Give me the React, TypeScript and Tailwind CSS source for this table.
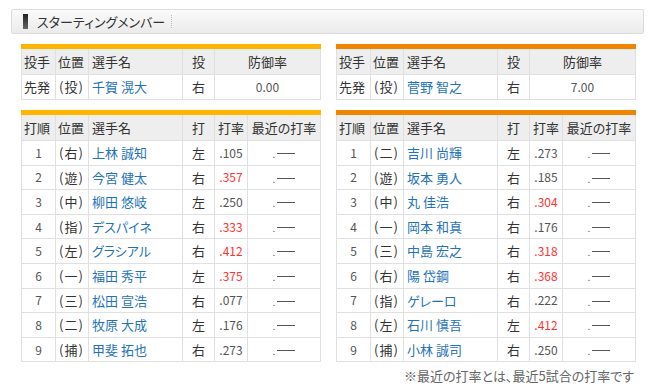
import React from "react";

type Batter = [string, string, string, string, string];

const leftBatters: Batter[] = [
  ["1", "右", "上林 誠知", "左", ".105"],
  ["2", "遊", "今宮 健太", "右", ".357"],
  ["3", "中", "柳田 悠岐", "左", ".250"],
  ["4", "指", "デスパイネ", "右", ".333"],
  ["5", "左", "グラシアル", "右", ".412"],
  ["6", "一", "福田 秀平", "左", ".375"],
  ["7", "三", "松田 宣浩", "右", ".077"],
  ["8", "二", "牧原 大成", "左", ".176"],
  ["9", "捕", "甲斐 拓也", "右", ".273"],
];

const rightBatters: Batter[] = [
  ["1", "二", "吉川 尚輝", "左", ".273"],
  ["2", "遊", "坂本 勇人", "右", ".185"],
  ["3", "中", "丸 佳浩", "右", ".304"],
  ["4", "一", "岡本 和真", "右", ".176"],
  ["5", "三", "中島 宏之", "右", ".318"],
  ["6", "右", "陽 岱鋼", "右", ".368"],
  ["7", "指", "ゲレーロ", "右", ".222"],
  ["8", "左", "石川 慎吾", "左", ".412"],
  ["9", "捕", "小林 誠司", "右", ".250"],
];

const td = "border border-[#e0e0e0] px-0 py-0 whitespace-nowrap overflow-hidden";
const th = "border border-[#e0e0e0] bg-[#eeeeee] font-normal whitespace-nowrap";

function Pos({ p }: { p: string }) {
  return (
    <span>
      (<span className="mx-[1px]">{p}</span>)
    </span>
  );
}

function PitcherTable({ bar, name, era }: { bar: string; name: string; era: string }) {
  return (
    <div className="w-[300px]">
      <div className={`h-[5px] ${bar}`} />
      <table className="w-full table-fixed border-collapse text-[13px] text-[#333]">
        <colgroup>
          <col className="w-[34px]" />
          <col className="w-[33px]" />
          <col className="w-[94px]" />
          <col className="w-[32px]" />
          <col />
        </colgroup>
        <thead>
          <tr className="h-[25px]">
            <th className={`${th} text-left pl-[2px] border-t-0`}>投手</th>
            <th className={`${th} text-left pl-[2px] border-t-0`}>位置</th>
            <th className={`${th} text-left pl-[3px] border-t-0`}>選手名</th>
            <th className={`${th} text-center border-t-0`}>投</th>
            <th className={`${th} text-center border-t-0`}>防御率</th>
          </tr>
        </thead>
        <tbody>
          <tr className="h-[25px]">
            <td className={`${td} pl-[2px]`}>先発</td>
            <td className={`${td} pl-[3px]`}>
              <Pos p="投" />
            </td>
            <td className={`${td} pl-[3px] text-[#1f73b7]`}>{name}</td>
            <td className={`${td} text-center`}>右</td>
            <td className={`${td} text-center text-[12px] text-[#555]`}>{era}</td>
          </tr>
        </tbody>
      </table>
    </div>
  );
}

function BattingTable({ bar, rows }: { bar: string; rows: Batter[] }) {
  return (
    <div className="w-[300px]">
      <div className={`h-[5px] ${bar}`} />
      <table className="w-full table-fixed border-collapse text-[13px] text-[#333]">
        <colgroup>
          <col className="w-[34px]" />
          <col className="w-[33px]" />
          <col className="w-[94px]" />
          <col className="w-[32px]" />
          <col className="w-[33px]" />
          <col />
        </colgroup>
        <thead>
          <tr className="h-[26px]">
            <th className={`${th} text-left pl-[2px] border-t-0`}>打順</th>
            <th className={`${th} text-left pl-[2px] border-t-0`}>位置</th>
            <th className={`${th} text-left pl-[3px] border-t-0`}>選手名</th>
            <th className={`${th} text-center border-t-0`}>打</th>
            <th className={`${th} text-center border-t-0`}>打率</th>
            <th className={`${th} text-center border-t-0`}>最近の打率</th>
          </tr>
        </thead>
        <tbody>
          {rows.map((r) => {
            const red = parseFloat(r[4]) >= 0.3;
            return (
              <tr key={r[0]} className="h-[24.6px]">
                <td className={`${td} text-center text-[12px] text-[#555]`}>{r[0]}</td>
                <td className={`${td} pl-[3px]`}>
                  <Pos p={r[1]} />
                </td>
                <td className={`${td} pl-[3px] text-[#1f73b7]`}>{r[2]}</td>
                <td className={`${td} text-center`}>{r[3]}</td>
                <td className={`${td} text-center text-[12px] ${red ? "text-[#ff3333]" : "text-[#555]"}`}>{r[4]}</td>
                <td className={`${td} text-center text-[#555]`}>
                  <span className="inline-flex items-end">
                    <span className="text-[10px] leading-none">.</span>
                    <span className="ml-[2px] mb-[5px] inline-block h-px w-[18px] bg-[#555]" />
                  </span>
                </td>
              </tr>
            );
          })}
        </tbody>
      </table>
    </div>
  );
}

export default function App() {
  return (
    <div
      className="w-[650px] h-[390px] bg-white relative [font-feature-settings:'palt']"
      style={{ fontFamily: '"Noto Sans CJK JP", "Noto Sans", sans-serif' }}
    >
      <div className="pt-[9px] pl-[11px] pr-[6px]">
        <div className="h-[25px] rounded-[2px] border border-[#dddddd] bg-gradient-to-b from-[#fafafa] to-[#ebebeb] flex items-center">
          <span className="ml-[11px] w-[5px] h-[15px] bg-gradient-to-b from-[#222] to-[#666]" />
          <span className="ml-[9px] text-[13px] text-[#333] leading-none">スターティングメンバー</span>
          <span className="ml-[6px] h-[13px] border-l border-dotted border-[#bbb]" />
        </div>
      </div>
      <div className="pl-[21px] mt-[10px] flex gap-[15px]">
        <PitcherTable bar="bg-[#ffb400]" name="千賀 滉大" era="0.00" />
        <PitcherTable bar="bg-[#f28500]" name="菅野 智之" era="7.00" />
      </div>
      <div className="pl-[21px] mt-[10px] flex gap-[15px]">
        <BattingTable bar="bg-[#ffb400]" rows={leftBatters} />
        <BattingTable bar="bg-[#f28500]" rows={rightBatters} />
      </div>
      <div className="pr-[16px] mt-[4px] text-right text-[13px] text-[#666]">
        ※最近の打率とは、最近5試合の打率です
      </div>
    </div>
  );
}
